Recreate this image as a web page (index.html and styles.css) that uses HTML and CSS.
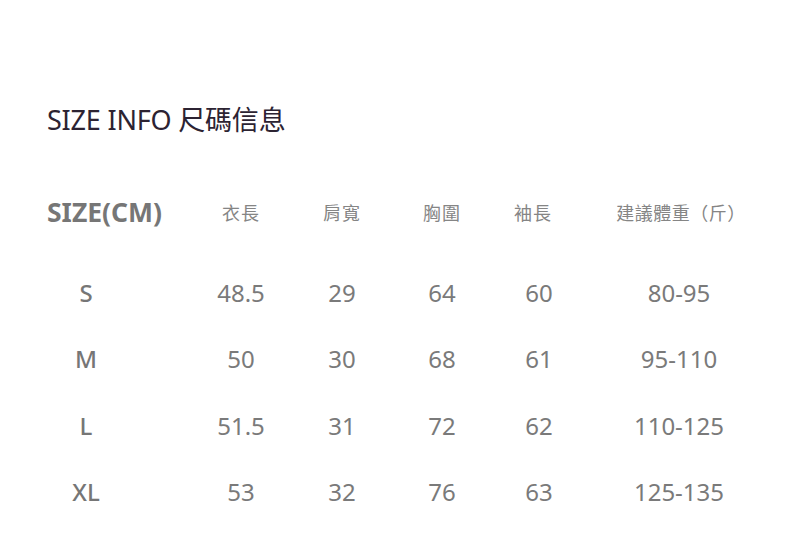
FILE: index.html
```html
<!DOCTYPE html>
<html lang="zh-Hant">
<head>
<meta charset="utf-8">
<title>SIZE INFO</title>
<link rel="stylesheet" href="styles.css">
</head>
<body>
<main class="page">
  <h1 class="title">SIZE INFO 尺碼信息</h1>
  <div class="table">
    <div class="row head">
      <div class="cell size-head">SIZE(CM)</div>
      <div class="cell">衣長</div>
      <div class="cell">肩寬</div>
      <div class="cell">胸圍</div>
      <div class="cell shift">袖長</div>
      <div class="cell weight">建議體重（斤）</div>
    </div>
    <div class="row">
      <div class="cell size">S</div>
      <div class="cell">48.5</div>
      <div class="cell">29</div>
      <div class="cell">64</div>
      <div class="cell">60</div>
      <div class="cell">80-95</div>
    </div>
    <div class="row">
      <div class="cell size">M</div>
      <div class="cell">50</div>
      <div class="cell">30</div>
      <div class="cell">68</div>
      <div class="cell">61</div>
      <div class="cell">95-110</div>
    </div>
    <div class="row">
      <div class="cell size">L</div>
      <div class="cell">51.5</div>
      <div class="cell">31</div>
      <div class="cell">72</div>
      <div class="cell">62</div>
      <div class="cell">110-125</div>
    </div>
    <div class="row">
      <div class="cell size">XL</div>
      <div class="cell">53</div>
      <div class="cell">32</div>
      <div class="cell">76</div>
      <div class="cell">63</div>
      <div class="cell">125-135</div>
    </div>
  </div>
</main>
</body>
</html>
```
FILE: styles.css
```css
html, body {
  margin: 0;
  padding: 0;
  background: #ffffff;
}
body {
  width: 790px;
  height: 556px;
  overflow: hidden;
  font-family: "Noto Sans", "Noto Sans CJK TC", sans-serif;
}
.page {
  padding-top: 102px;
}
.title {
  margin: 0 0 42px 47px;
  font-size: 27px;
  line-height: 36px;
  font-weight: 400;
  color: #2c2332;
  letter-spacing: -0.2px;
}
.table {
  display: flex;
  flex-direction: column;
}
.row {
  display: grid;
  grid-template-columns: 172px 138px 64px 136px 58px 1fr;
  height: 66.5px;
  align-items: center;
  font-size: 24px;
  color: #7a7a7a;
}
.row.head {
  height: 66px;
  margin-bottom: 13px;
  padding-bottom: 2px;
  box-sizing: border-box;
  font-size: 18px;
  color: #858585;
  letter-spacing: 1px;
}
.cell {
  text-align: center;
  white-space: nowrap;
}
.shift {
  padding-right: 12px;
}
.weight {
  letter-spacing: 0.5px;
  padding-left: 4px;
}
.size-head {
  text-align: left;
  padding-left: 47px;
  font-size: 26.5px;
  font-weight: 700;
  color: #767676;
  letter-spacing: 0;
}
.size {
  font-weight: 500;
  color: #767676;
}
```
